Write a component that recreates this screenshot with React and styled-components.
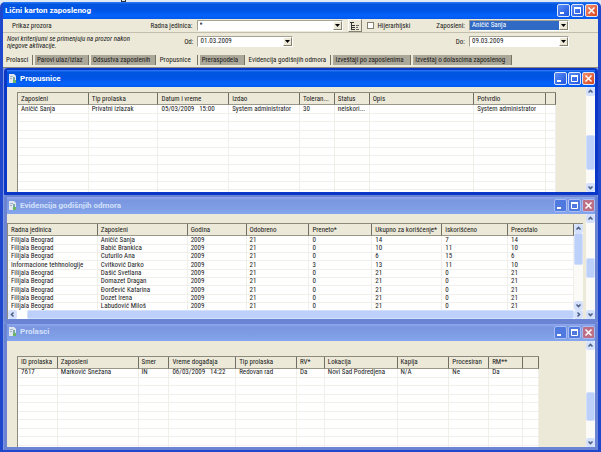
import React from "react";
import styled, { createGlobalStyle } from "styled-components";

const beige = "#ece9d8";
const uiFont = '"Roboto Condensed", "Liberation Sans", sans-serif';

const GlobalStyle = createGlobalStyle`
  *, *::before, *::after { box-sizing: border-box; }
  html, body, #root { height: 100%; }
  body {
    margin: 0;
    overflow: hidden;
    background: #dfe9f5;
    color: #1a1a1a;
    font: 7px/8px ${uiFont};
  }
  button, input, select { font: inherit; color: inherit; margin: 0; padding: 0; }
`;

const Desktop = styled.div`
  display: flex;
  flex-direction: column;
  height: 100%;
`;

const SheetEdge = styled.div`
  flex: none;
  height: 2px;
  padding-left: 121px;
  &::before {
    content: "";
    display: block;
    width: 5px;
    height: 2px;
    border: 1px solid #333;
    border-top: 0;
  }
`;

const MainWindow = styled.main`
  flex: 1;
  min-height: 0;
  display: flex;
  flex-direction: column;
  border: solid #1f48cc;
  border-width: 0 3px 2px;
  border-radius: 5px 5px 0 0;
  background: #1f4fd0;
`;

const TitleBar = styled.header`
  flex: none;
  display: flex;
  align-items: center;
  gap: 3px;
  height: 17px;
  padding-left: 2px;
  color: ${(p) => (p.$inactive ? "#d3e0fa" : "#fff")};
  background: ${(p) =>
    p.$inactive
      ? "linear-gradient(#8fa8ee 0, #7b96e0 20%, #7f9ee6 70%, #84a6ee 100%)"
      : "linear-gradient(#2f7cf5 0, #0055e0 14%, #0054e6 50%, #0463fb 80%, #0458ec 100%)"};
`;

const Title = styled.h1`
  flex: 1;
  margin: 0;
  font: bold 8px/12px Roboto, "Liberation Sans", sans-serif;
`;

const Controls = styled.div`
  display: flex;
  gap: 1px;
`;

const ControlButton = styled.button`
  display: grid;
  place-items: center;
  width: 13px;
  height: 13px;
  border: 1px solid ${(p) => (p.$inactive ? "#a9bdf3" : "#dfe8fb")};
  border-radius: 2px;
  color: #fff;
  background: ${(p) =>
    p.$close
      ? p.$inactive ? "#bd6f85" : "linear-gradient(135deg, #f0916f, #d9431c)"
      : p.$inactive ? "#4f79de" : "linear-gradient(135deg, #5b8df5, #1f55dd)"};
`;

const Panel = styled.form`
  flex: none;
  display: flex;
  flex-direction: column;
  background: ${beige};
  border-bottom: 1px solid #8c8a80;
`;

const Row = styled.div`
  display: flex;
  align-items: ${(p) => (p.$tall ? "flex-start" : "center")};
  height: ${(p) => (p.$tall ? "22px" : "14px")};
  padding-right: 29px;
  padding-top: ${(p) => (p.$tall ? "3px" : "0")};
  border-bottom: ${(p) => (p.$tall ? "0" : "1px solid #c3bfae")};
`;

const MenuButton = styled.button`
  border: 0;
  padding: 0 0 0 9px;
  text-align: left;
  background: none;
  width: 25%;
`;

const Note = styled.p`
  width: 28%;
  margin: 0;
  padding: 0 24px 0 4px;
  line-height: 7px;
  font-style: italic;
`;

const Field = styled.div`
  display: flex;
  align-items: center;
  gap: 4px;
  margin-left: ${(p) => (p.$push ? "auto" : "0")};
`;

const FieldLabel = styled.label`
  width: ${(p) => (p.$wide ? "48px" : "32px")};
  text-align: right;
`;

const Combo = styled.div`
  position: relative;
  width: ${(p) => p.$width}px;
  height: 11px;
`;

const Select = styled.select`
  appearance: none;
  display: block;
  width: 100%;
  height: 11px;
  padding: 0 12px 0 2px;
  border: 1px solid #a5a291;
  border-right-color: #fff;
  border-bottom-color: #fff;
  border-radius: 0;
  outline: 0;
  line-height: 9px;
  color: ${(p) => (p.$selected ? "#fff" : "#1a1a1a")};
  background: ${(p) => (p.$selected ? "#316ac5" : "#fff")};
`;

const ComboArrow = styled.span`
  position: absolute;
  top: 1px;
  right: 1px;
  display: grid;
  place-items: center;
  width: 9px;
  height: 9px;
  pointer-events: none;
  background: ${beige};
  border: 1px solid #fff;
  border-right-color: #858270;
  border-bottom-color: #858270;
`;

const TreeButton = styled.button`
  display: grid;
  place-items: center;
  width: 14px;
  height: 13px;
  margin: 0 5px;
  border: 1px solid #fff;
  border-right-color: #858270;
  border-bottom-color: #858270;
  background: ${beige};
`;

const CheckLabel = styled.label`
  display: flex;
  align-items: center;
  gap: 4px;
`;

const CheckBox = styled.input`
  appearance: none;
  width: 7px;
  height: 7px;
  border: 1px solid #858270;
  background: #fff;
`;

const TabList = styled.div`
  display: flex;
  align-items: center;
  gap: 2px;
  height: 12px;
  padding: 0 0 2px 1px;
`;

const Tab = styled.button`
  height: 10px;
  width: ${(p) => p.$share}%;
  border: 0;
  border-right: 1px solid #777466;
  padding: 0 0 0 2px;
  text-align: left;
  white-space: nowrap;
  background: ${(p) => (p.$shaded ? "#aca899" : beige)};
`;

const Workspace = styled.div`
  flex: 1;
  min-height: 0;
  display: grid;
  grid-template-rows: 127fr 126fr 128fr;
  background: #7b96e0;
`;

const Child = styled.section`
  min-height: 0;
  display: flex;
  flex-direction: column;
  margin-left: 1px;
  border: solid ${(p) => (p.$inactive ? "#6a83d3" : "#0a37c8")};
  border-width: 2px 3px 3px;
  border-radius: 4px 4px 0 0;
`;

const ChildBody = styled.div`
  flex: 1;
  min-height: 0;
  display: flex;
  background: ${beige};
`;

const ListView = styled.div`
  flex: 1;
  min-width: 0;
  display: flex;
  flex-direction: column;
  margin: ${(p) => p.$margin};
  border: solid #8c8a7c;
  border-width: 1px 0 0 1px;
  background: #fff;
`;

const ListMain = styled.div`
  flex: 1;
  min-height: 0;
  display: flex;
`;

const Viewport = styled.div`
  flex: 1;
  min-width: 0;
  overflow: hidden;
`;

const Table = styled.table`
  width: 100%;
  table-layout: fixed;
  border-collapse: separate;
  border-spacing: 0;
`;

const Column = styled.col`
  width: ${(p) => p.$share}%;
`;

const HeadCell = styled.th`
  height: 12px;
  padding: 0 0 0 3px;
  text-align: left;
  font-weight: normal;
  white-space: nowrap;
  overflow: hidden;
  background: ${beige};
  border-right: 1px solid #716f64;
  border-bottom: 1px solid #9a9788;
`;

const BodyRow = styled.tr`
  height: ${(p) => (p.$tall ? "9px" : "8px")};
`;

const Cell = styled.td`
  padding: 0 0 0 3px;
  line-height: 7px;
  white-space: pre;
  overflow: hidden;
  text-overflow: ellipsis;
  border-right: 1px solid #f0efea;
  border-bottom: 1px solid #f0efea;
`;

const ScrollTrack = styled.div`
  flex: none;
  display: flex;
  flex-direction: ${(p) => (p.$horizontal ? "row" : "column")};
  ${(p) => (p.$horizontal ? "height" : "width")}: 9px;
  background: ${(p) => (p.$horizontal ? "#fff" : "#fbfaf7")};
`;

const ScrollButton = styled.button`
  flex: none;
  display: grid;
  place-items: center;
  width: 9px;
  height: 9px;
  border: 0;
  border-radius: 2px;
  background: #d5e1fc;
`;

const ScrollGap = styled.div`
  flex: ${(p) => p.$grow};
`;

const Thumb = styled.div`
  flex: ${(p) => p.$grow};
  border: 1px solid #d3e0fd;
  border-radius: 2px;
  background: #bdd0fa;
`;

const DownArrow = () => (
  <svg width="5" height="3" viewBox="0 0 5 3" aria-hidden="true">
    <path d="M0 0h5L2.5 3z" fill="#000" />
  </svg>
);

const chevrons = {
  up: "M1.5 4.5l2-2 2 2",
  down: "M1.5 2.5l2 2 2-2",
  left: "M4.5 1.5l-2 2 2 2",
  right: "M2.5 1.5l2 2-2 2",
};

function Chevron({ direction }) {
  return (
    <svg width="7" height="7" viewBox="0 0 7 7" aria-hidden="true">
      <path d={chevrons[direction]} fill="none" stroke="#4d6185" strokeWidth="1.6" />
    </svg>
  );
}

function ScrollBar({ horizontal, before, thumb, after }) {
  return (
    <ScrollTrack $horizontal={horizontal}>
      <ScrollButton type="button" aria-label={horizontal ? "Levo" : "Gore"}>
        <Chevron direction={horizontal ? "left" : "up"} />
      </ScrollButton>
      <ScrollGap $grow={before} />
      <Thumb $grow={thumb} />
      <ScrollGap $grow={after} />
      <ScrollButton type="button" aria-label={horizontal ? "Desno" : "Dole"}>
        <Chevron direction={horizontal ? "right" : "down"} />
      </ScrollButton>
    </ScrollTrack>
  );
}

function WindowControls({ inactive }) {
  return (
    <Controls>
      <ControlButton type="button" aria-label="Umanji" $inactive={inactive}>
        <svg width="9" height="9" viewBox="0 0 9 9"><path d="M1 6h4v2H1z" fill="#fff" /></svg>
      </ControlButton>
      <ControlButton type="button" aria-label="Uvećaj" $inactive={inactive}>
        <svg width="9" height="9" viewBox="0 0 9 9">
          <path d="M1.5 2h6v5.5h-6z" fill="none" stroke="#fff" />
          <path d="M1 1h7v2H1z" fill="#fff" />
        </svg>
      </ControlButton>
      <ControlButton type="button" aria-label="Zatvori" $inactive={inactive} $close>
        <svg width="9" height="9" viewBox="0 0 9 9">
          <path d="M1.5 1.5l6 6M7.5 1.5l-6 6" stroke="#fff" strokeWidth="1.5" />
        </svg>
      </ControlButton>
    </Controls>
  );
}

const DocumentIcon = () => (
  <svg width="8" height="10" viewBox="0 0 8 10" aria-hidden="true">
    <path d="M0 0h5l2 2v7H0z" fill="#dfe6ee" />
    <path d="M1 2.5h3M1 4.5h2" stroke="#9fb0c9" />
    <path d="M4 3h2v3H4z" fill="#7aa9a6" />
    <path d="M4 6h3v3H4z" fill="#6cb565" />
  </svg>
);

function ComboField({ id, label, value, width, wide, push, selected }) {
  return (
    <Field $push={push}>
      <FieldLabel htmlFor={id} $wide={wide}>{label}</FieldLabel>
      <Combo $width={width}>
        <Select id={id} $selected={selected} defaultValue={value}>
          <option>{value}</option>
        </Select>
        <ComboArrow><DownArrow /></ComboArrow>
      </Combo>
    </Field>
  );
}

function DataTable({ columns, rows, rowCount, tallEvery }) {
  const total = columns.reduce((sum, c) => sum + c[1], 0);
  const lines = Array.from({ length: rowCount }, (_, i) => rows[i] || []);
  return (
    <Table>
      <colgroup>
        {columns.map(([, weight], i) => <Column key={i} $share={(weight / total) * 100} />)}
      </colgroup>
      <thead>
        <tr>{columns.map(([name], i) => <HeadCell key={i} scope="col">{name}</HeadCell>)}</tr>
      </thead>
      <tbody>
        {lines.map((line, r) => (
          <BodyRow key={r} $tall={r % tallEvery === 0}>
            {columns.map((_, c) => <Cell key={c}>{line[c]}</Cell>)}
          </BodyRow>
        ))}
      </tbody>
    </Table>
  );
}

function ChildWindow({ title, inactive, scroll, children }) {
  return (
    <Child $inactive={inactive}>
      <TitleBar $inactive={inactive}>
        <DocumentIcon />
        <Title as="h2">{title}</Title>
        <WindowControls inactive={inactive} />
      </TitleBar>
      <ChildBody>
        {children}
        <ScrollBar {...scroll} />
      </ChildBody>
    </Child>
  );
}

const tabs = [
  ["Prolasci", 29, false],
  ["Parovi ulaz/izlaz", 54, true],
  ["Odsustva zaposlenih", 65, true],
  ["Propusnice", 40, false],
  ["Preraspodela", 45, true],
  ["Evidencija godišnjih odmora", 85, false],
  ["Izveštaji po zaposlenima", 78, true],
  ["Izveštaj o dolascima zaposlenog", 99, true],
];

const passColumns = [
  ["Zaposleni", 71], ["Tip prolaska", 70], ["Datum i vreme", 71], ["Izdao", 71],
  ["Toleran...", 35], ["Status", 35], ["Opis", 105], ["Potvrdio", 72], ["", 10],
];
const passRows = [
  ["Aničić Sanja", "Privatni izlazak", "05/03/2009   15:00", "System administrator", "30", "neiskori...", "", "System administrator"],
];

const leaveColumns = [
  ["Radna jedinica", 90], ["Zaposleni", 90], ["Godina", 59], ["Odobreno", 63],
  ["Preneto*", 63], ["Ukupno za korišćenje*", 70], ["Iskorišćeno", 66], ["Preostalo", 66],
];
const leaveRows = [
  ["Filijala Beograd", "Aničić Sanja", "2009", "21", "0", "14", "7", "14"],
  ["Filijala Beograd", "Babić Brankica", "2009", "21", "0", "10", "11", "10"],
  ["Filijala Beograd", "Čuturilo Ana", "2009", "21", "0", "6", "15", "6"],
  ["Informacione tehhnologije", "Cvitković Darko", "2009", "21", "3", "13", "11", "10"],
  ["Filijala Beograd", "Dašić Svetlana", "2009", "21", "0", "21", "0", "21"],
  ["Filijala Beograd", "Domazet Dragan", "2009", "21", "0", "21", "0", "21"],
  ["Filijala Beograd", "Đorđević Katarina", "2009", "21", "0", "21", "0", "21"],
  ["Filijala Beograd", "Dozet Irena", "2009", "21", "0", "21", "0", "21"],
  ["Filijala Beograd", "Labudović Miloš", "2009", "21", "0", "21", "0", "21"],
];

const entryColumns = [
  ["ID prolaska", 40], ["Zaposleni", 81], ["Smer", 31], ["Vreme događaja", 67],
  ["Tip prolaska", 61], ["RV*", 28], ["Lokacija", 73], ["Kapija", 52],
  ["Procesiran", 40], ["RM**", 34], ["", 16],
];
const entryRows = [
  ["7617", "Marković Snežana", "IN", "06/03/2009   14:22", "Redovan rad", "Da", "Novi Sad Podredjena", "N/A", "Ne", "Da"],
];

export default function App() {
  return (
    <>
      <GlobalStyle />
      <Desktop>
        <SheetEdge />
        <MainWindow>
          <TitleBar>
            <Title>Lični karton zaposlenog</Title>
            <WindowControls />
          </TitleBar>
          <Panel>
            <Row>
              <MenuButton type="button">Prikaz prozora</MenuButton>
              <ComboField id="unit" label="Radna jedinica:" value="*" width={146} wide />
              <TreeButton type="button" aria-label="Organizaciona struktura">
                <svg width="10" height="10" viewBox="0 0 10 10">
                  <path d="M0 1.5h4M1.5 2v7M2 4.5h3M2 6.5h3M2 8.5h3" stroke="#333" fill="none" />
                  <path d="M6 4.5h3M6 6.5h2M6 8.5h3" stroke="#666" />
                </svg>
              </TreeButton>
              <CheckLabel><CheckBox type="checkbox" />Hijerarhijski</CheckLabel>
              <ComboField id="employee" label="Zaposleni:" value="Aničić Sanja" width={100} push selected />
            </Row>
            <Row $tall>
              <Note>Novi kriterijumi se primenjuju na prozor nakon njegove aktivacije.</Note>
              <ComboField id="from" label="Od:" value="01.03.2009" width={96} />
              <ComboField id="to" label="Do:" value="09.03.2009" width={100} push />
            </Row>
            <TabList role="tablist">
              {tabs.map(([name, width, shaded]) => (
                <Tab key={name} type="button" role="tab" $share={(width / 595) * 100} $shaded={shaded}>{name}</Tab>
              ))}
            </TabList>
          </Panel>
          <Workspace>
            <ChildWindow title="Propusnice" scroll={{ before: 40, thumb: 33, after: 14 }}>
              <ListView $margin="5px 30px 0 10px">
                <Viewport>
                  <DataTable columns={passColumns} rows={passRows} rowCount={11} tallEvery={2} />
                </Viewport>
              </ListView>
            </ChildWindow>
            <ChildWindow title="Evidencija godišnjih odmora" inactive scroll={{ before: 32, thumb: 17, after: 29 }}>
              <ListView $margin="9px 3px 0 0">
                <ListMain>
                  <Viewport>
                    <DataTable columns={leaveColumns} rows={leaveRows} rowCount={9} tallEvery={3} />
                  </Viewport>
                  <ScrollBar before={0} thumb={30} after={37} />
                </ListMain>
                <ScrollBar horizontal before={10} thumb={540} after={0} />
              </ListView>
            </ChildWindow>
            <ChildWindow title="Prolasci" inactive scroll={{ before: 40, thumb: 26, after: 16 }}>
              <ListView $margin="15px 47px 0 10px">
                <Viewport>
                  <DataTable columns={entryColumns} rows={entryRows} rowCount={10} tallEvery={2} />
                </Viewport>
              </ListView>
            </ChildWindow>
          </Workspace>
        </MainWindow>
      </Desktop>
    </>
  );
}
